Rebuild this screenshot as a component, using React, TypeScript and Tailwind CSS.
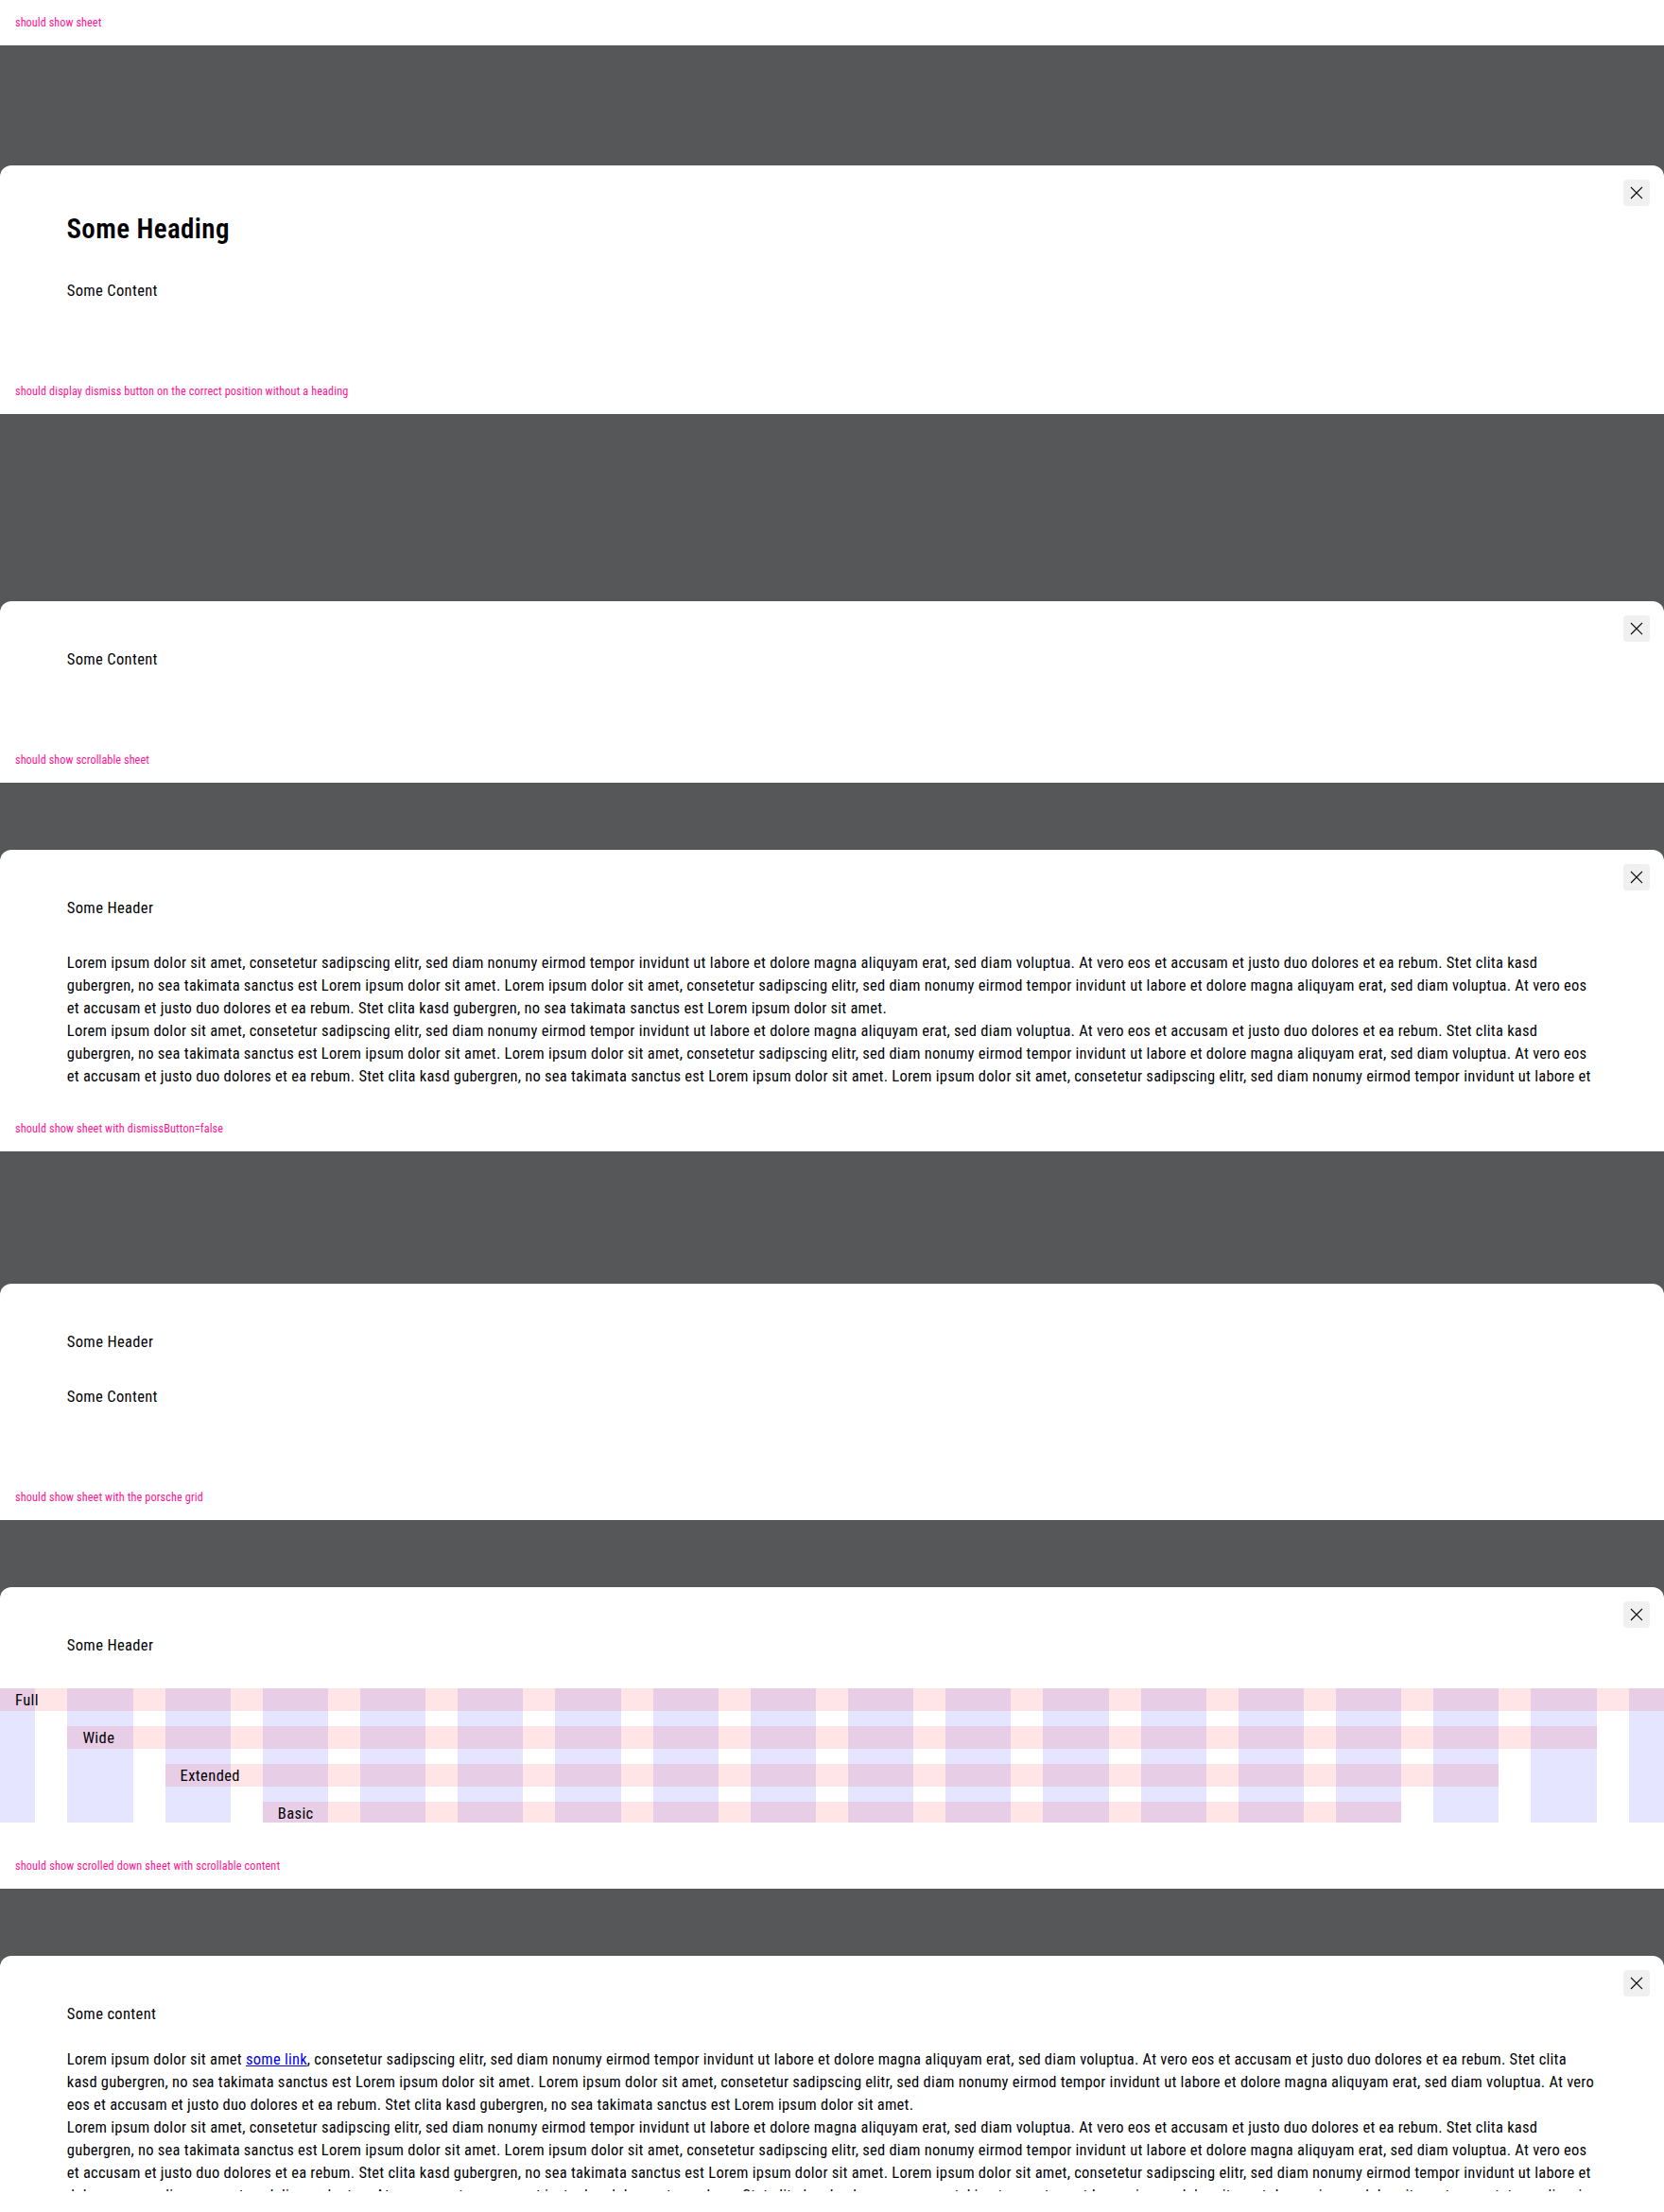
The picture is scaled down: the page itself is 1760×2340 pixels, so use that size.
import type { ReactNode } from 'react'

function CloseIcon() {
  return (
    <svg viewBox="0 0 28 28" className="size-7" fill="none" stroke="#010205" strokeWidth="1.1">
      <path d="M8.4 8.4l11.2 11.2M19.6 8.4L8.4 19.6" strokeLinecap="square" />
    </svg>
  )
}

type CaseProps = {
  label: string
  labelSpacing?: string
  height: string
  dismissible?: boolean
  children: ReactNode
}

function SheetCase({ label, labelSpacing = 'tracking-[0.11px]', height, dismissible = true, children }: CaseProps) {
  return (
    <section className="flex h-[390px] flex-col">
      <div className={`flex h-12 shrink-0 items-center px-4 text-[12.25px] text-[#ff1493] ${labelSpacing}`}>
        {label}
      </div>
      <div className="flex flex-1 flex-col justify-end bg-[#565759]">
        <div className={`relative flex flex-col rounded-t-xl bg-white pt-[50px] pb-[22px] ${height}`}>
          {dismissible && (
            <button aria-label="Dismiss" className="absolute top-[15px] right-[15px] size-7 rounded-sm bg-[#f0f0f1]">
              <CloseIcon />
            </button>
          )}
          {children}
        </div>
      </div>
    </section>
  )
}

function Line({ children, spacing = 'tracking-[0.24px]' }: { children: ReactNode; spacing?: string }) {
  return <span className={`block whitespace-nowrap ${spacing}`}>{children}</span>
}

function Header({ children }: { children: ReactNode }) {
  return <div className="px-[70.8px] tracking-[0.36px]">{children}</div>
}

const opening =
  'Lorem ipsum dolor sit amet, consetetur sadipscing elitr, sed diam nonumy eirmod tempor invidunt ut labore et dolore magna aliquyam erat, sed diam voluptua. At vero eos et accusam et justo duo dolores et ea rebum. Stet clita kasd'
const middle =
  'gubergren, no sea takimata sanctus est Lorem ipsum dolor sit amet. Lorem ipsum dolor sit amet, consetetur sadipscing elitr, sed diam nonumy eirmod tempor invidunt ut labore et dolore magna aliquyam erat, sed diam voluptua. At vero eos'
const closing =
  'et accusam et justo duo dolores et ea rebum. Stet clita kasd gubergren, no sea takimata sanctus est Lorem ipsum dolor sit amet.'
const restart =
  ' Lorem ipsum dolor sit amet, consetetur sadipscing elitr, sed diam nonumy eirmod tempor invidunt ut labore et'

const gridRows = [
  { name: 'Full', span: 'col-start-1 col-end-19' },
  { name: 'Wide', span: 'col-start-2 col-end-18' },
  { name: 'Extended', span: 'col-start-3 col-end-17' },
  { name: 'Basic', span: 'col-start-4 col-end-16' },
]

const columns = 'grid grid-cols-[37.4px_repeat(16,minmax(0,1fr))_37.4px] gap-x-[34px]'

function GridDemo() {
  return (
    <div className="relative mt-[33px] min-h-0 flex-1 overflow-hidden">
      <div className={`absolute inset-0 ${columns}`}>
        {Array.from({ length: 18 }, (_, i) => (
          <div key={i} className="bg-[rgba(0,0,255,0.1)]" />
        ))}
      </div>
      <div className={`relative gap-y-4 ${columns}`}>
        {gridRows.map((row) => (
          <div
            key={row.name}
            className={`h-6 bg-[rgba(255,0,0,0.1)] pl-4 leading-[26px] tracking-[0.4px] ${row.span}`}
          >
            {row.name}
          </div>
        ))}
      </div>
    </div>
  )
}

export default function App() {
  return (
    <main className="w-[1760px] bg-white font-[Roboto,sans-serif] text-[16.5px] leading-6 font-normal text-[#010205] font-stretch-semi-condensed">
      <SheetCase label="should show sheet" labelSpacing="tracking-[0.06px]" height="h-[215px]">
        <h2 className="-mt-px px-[70.4px] text-[29px] leading-9 font-semibold tracking-[0.4px]">Some Heading</h2>
        <div className="mt-9 px-[70.8px] tracking-[0.34px]">Some Content</div>
      </SheetCase>

      <SheetCase label="should display dismiss button on the correct position without a heading" height="h-[144px]">
        <div className="px-[70.8px] tracking-[0.34px]">Some Content</div>
      </SheetCase>

      <SheetCase label="should show scrollable sheet" labelSpacing="tracking-[0.06px]" height="h-[271px]">
        <Header>Some Header</Header>
        <div className="mt-[34px] min-h-0 flex-1 overflow-hidden px-[70.8px]">
          <Line spacing="tracking-[0.25px]">{opening}</Line>
          <Line>{middle}</Line>
          <Line>{closing}</Line>
          <Line spacing="tracking-[0.25px]">{opening}</Line>
          <Line>{middle}</Line>
          <Line spacing="tracking-[0.25px]">
            {closing}
            {restart}
          </Line>
        </div>
      </SheetCase>

      <SheetCase label="should show sheet with dismissButton=false" height="h-[202px]" dismissible={false}>
        <Header>Some Header</Header>
        <div className="mt-[34px] px-[70.8px] tracking-[0.34px]">Some Content</div>
      </SheetCase>

      <SheetCase label="should show sheet with the porsche grid" height="h-[271px]">
        <Header>Some Header</Header>
        <GridDemo />
      </SheetCase>

      <SheetCase
        label="should show scrolled down sheet with scrollable content"
        labelSpacing="tracking-[0.13px]"
        height="h-[271px]"
      >
        <Header>Some content</Header>
        <div className="mt-6 min-h-0 flex-1 overflow-hidden px-[70.8px]">
          <Line>
            Lorem ipsum dolor sit amet{' '}
            <a href="#" className="text-[#0000ee] underline">
              some link
            </a>
            , consetetur sadipscing elitr, sed diam nonumy eirmod tempor invidunt ut labore et dolore magna aliquyam
            erat, sed diam voluptua. At vero eos et accusam et justo duo dolores et ea rebum. Stet clita
          </Line>
          <Line>
            kasd gubergren, no sea takimata sanctus est Lorem ipsum dolor sit amet. Lorem ipsum dolor sit amet,
            consetetur sadipscing elitr, sed diam nonumy eirmod tempor invidunt ut labore et dolore magna aliquyam erat,
            sed diam voluptua. At vero
          </Line>
          <Line>eos {closing}</Line>
          <Line spacing="tracking-[0.25px]">{opening}</Line>
          <Line>{middle}</Line>
          <Line spacing="tracking-[0.25px]">
            {closing}
            {restart}
          </Line>
          <Line>
            dolore magna aliquyam erat, sed diam voluptua. At vero eos et accusam et justo duo dolores et ea rebum. Stet
            clita kasd gubergren, no sea takimata sanctus est Lorem ipsum dolor sit amet. Lorem ipsum dolor sit amet,
            consetetur sadipscing
          </Line>
        </div>
      </SheetCase>
    </main>
  )
}
